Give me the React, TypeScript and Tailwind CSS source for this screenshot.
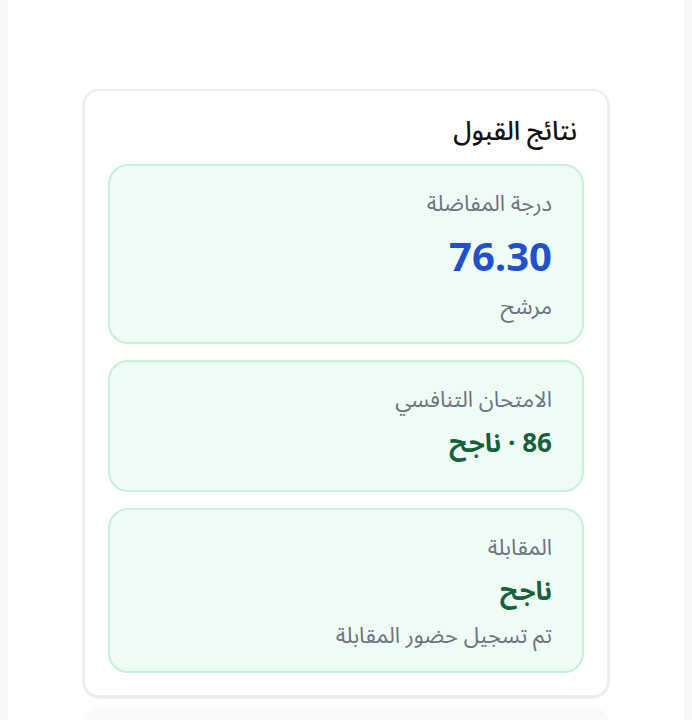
const rows = [
  { label: 'درجة المفاضلة', value: '76.30', tone: 'blue', note: 'مرشح' },
  { label: 'الامتحان التنافسي', value: '86 · ناجح', tone: 'green', note: '' },
  { label: 'المقابلة', value: 'ناجح', tone: 'green', note: 'تم تسجيل حضور المقابلة' },
];

const ResultBox = ({ label, value, tone, note }: { label: string; value: string; tone: string; note: string }) => {
  return (
    <div className={`rounded-[20px] border-2 border-[#c3f0da] bg-[#effcf6] px-[30px] pt-[22px] ${note ? 'pb-[19px]' : 'pb-[24px]'}`}>
      <p className="text-[22px] leading-[32px] text-[#6b7280]">{label}</p>
      {tone === 'blue' ? (
        <p className="mt-[14px] text-[40px] leading-[50px] font-bold text-[#2150cc]">{value}</p>
      ) : (
        <p className="mt-[6px] text-[26px] leading-[44px] font-bold text-[#15613d]">{value}</p>
      )}
      {note && <p className={`${tone === 'blue' ? 'mt-[7px]' : 'mt-[6px]'} text-[22px] leading-[32px] text-[#6b7280]`}>{note}</p>}
    </div>
  );
};

export default function App() {
  return (
    <div className="min-h-[720px] bg-[#f7f7f7] px-[8px]" style={{ fontFamily: '"Noto Sans Arabic", "DejaVu Sans", sans-serif' }}>
      <div dir="rtl" className="min-h-[720px] bg-white pt-[89px] px-[75px] pb-[10px]">
        <div className="rounded-[16px] border-2 border-[#ececef] bg-white px-[23px] pt-[23px] pb-[22px] shadow-sm">
          <h2 className="mb-[14px] px-[7px] text-[26px] leading-[36px] font-medium text-[#111111]">نتائج القبول</h2>
          <div className="flex flex-col gap-[16px]">
            {rows.map((r) => (
              <ResultBox key={r.label} {...r} />
            ))}
          </div>
        </div>
        <div className="mt-[10px] h-[20px] rounded-t-[16px] bg-[#fafafa]" />
      </div>
    </div>
  );
}
